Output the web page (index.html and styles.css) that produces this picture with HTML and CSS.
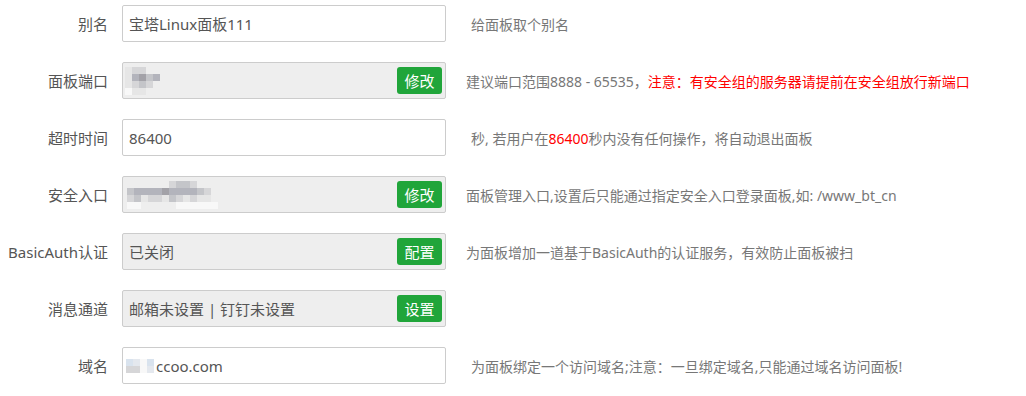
FILE: index.html
```html
<!DOCTYPE html>
<html lang="zh-CN">
<head>
  <meta charset="UTF-8">
  <title>面板设置</title>
  <link rel="stylesheet" href="styles.css">
</head>
<body>
  <div class="setting-list">

    <div class="line">
      <span class="tname">别名</span>
      <input class="field" type="text" value="宝塔Linux面板111">
      <span class="tips tips-sp">给面板取个别名</span>
    </div>

    <div class="line">
      <span class="tname">面板端口</span>
      <div class="field disabled">
        <!-- 端口号已打码 -->
        <span class="mosaic port">
          <i class="m1"></i><i class="m2"></i><i class="m2"></i><i></i><i></i><i></i>
          <i class="m1"></i><i class="m4"></i><i class="m5"></i><i class="m3"></i><i class="m4"></i><i></i>
          <i class="m1"></i><i class="m2"></i><i class="m3"></i><i class="m2"></i><i></i><i></i>
          <i class="m0"></i><i class="m1"></i><i class="m1"></i><i></i><i></i><i></i>
        </span>
        <button class="btn">修改</button>
      </div>
      <span class="tips">建议端口范围8888 - 65535，<span class="red">注意：有安全组的服务器请提前在安全组放行新端口</span></span>
    </div>

    <div class="line">
      <span class="tname">超时时间</span>
      <input class="field" type="text" value="86400">
      <span class="tips tips-sp">秒, 若用户在<span class="red">86400</span>秒内没有任何操作，将自动退出面板</span>
    </div>

    <div class="line">
      <span class="tname">安全入口</span>
      <div class="field disabled">
        <span class="mosaic entry">
          <i></i><i></i><i></i><i></i><i></i><i></i><i class="m2"></i><i class="m3"></i><i class="m3"></i><i class="m2"></i><i></i><i></i><i></i>
          <i class="m3"></i><i class="m4"></i><i class="m4"></i><i class="m4"></i><i class="m4"></i><i class="m5"></i><i class="m4"></i><i class="m4"></i><i class="m4"></i><i class="m4"></i><i class="m3"></i><i class="m2"></i><i></i>
          <i class="m2"></i><i class="m3"></i><i class="m1"></i><i class="m2"></i><i class="m2"></i><i class="m1"></i><i class="m3"></i><i class="m2"></i><i class="m1"></i><i class="m2"></i><i class="m1"></i><i class="m1"></i><i></i>
          <i class="m0"></i><i class="m0"></i><i></i><i></i><i></i><i></i><i></i><i class="m0"></i><i class="m0"></i><i class="m0"></i><i class="m0"></i><i class="m0"></i><i class="m0"></i>
        </span>
        <button class="btn">修改</button>
      </div>
      <span class="tips">面板管理入口,设置后只能通过指定安全入口登录面板,如: /www_bt_cn</span>
    </div>

    <div class="line">
      <span class="tname">BasicAuth认证</span>
      <div class="field disabled">
        <span class="val">已关闭</span>
        <button class="btn">配置</button>
      </div>
      <span class="tips">为面板增加一道基于BasicAuth的认证服务，有效防止面板被扫</span>
    </div>

    <div class="line">
      <span class="tname">消息通道</span>
      <div class="field disabled">
        <span class="val">邮箱未设置 | 钉钉未设置</span>
        <button class="btn">设置</button>
      </div>
    </div>

    <div class="line">
      <span class="tname">域名</span>
      <div class="field">
        <span class="mosaic domain">
          <i class="b1"></i><i class="b2"></i><i class="m0"></i><i class="b1"></i>
          <i class="m2"></i><i class="m2"></i><i class="m0"></i><i class="b2"></i>
        </span>
        <span class="val">ccoo.com</span>
      </div>
      <span class="tips tips-sp">为面板绑定一个访问域名;注意：一旦绑定域名,只能通过域名访问面板!</span>
    </div>

  </div>
</body>
</html>
```

FILE: styles.css
```css
body {
  margin: 0;
  background: #fff;
  font-family: "Noto Sans", "Noto Sans CJK SC", sans-serif;
  color: #555;
}

.setting-list { display: flex; flex-direction: column; gap: 20px; padding-top: 5px; }
.line { display: flex; align-items: center; height: 37px; }

.tname { width: 108px; margin-right: 14px; text-align: right; font-size: 15px; color: #555; white-space: nowrap; }

.field {
  box-sizing: border-box;
  width: 324px;
  height: 37px;
  border: 1px solid #ccc;
  border-radius: 2px;
  padding: 0 3px 0 6px;
  font-family: inherit;
  font-size: 15px;
  color: #555;
  background: #fff;
  display: flex;
  align-items: center;
  outline: none;
}
.disabled { background: #eee; }
.val { white-space: nowrap; }

.btn {
  margin-left: auto;
  height: 27px;
  width: 45px;
  padding: 0;
  border: none;
  border-radius: 3px;
  background: #20a53a;
  color: #fff;
  font-family: inherit;
  font-size: 15px;
  cursor: pointer;
}

.tips { margin-left: 20px; font-size: 14px; color: #777; white-space: nowrap; }
.tips-sp { margin-left: 25px; }
.red { color: #f00; }

/* mosaic blocks for hidden values */
.mosaic { display: inline-grid; grid-auto-rows: 7px; }
.mosaic i { display: block; }
.port { grid-template-columns: repeat(6, 7px); margin-left: -4px; }
.entry { grid-template-columns: repeat(13, 7px); margin-left: -2px; }
.domain { grid-template-columns: repeat(4, 7px); margin-left: -3px; margin-right: 2px; }
.m0 { background: #f8f8f8; }
.m1 { background: #e6e6e6; }
.m2 { background: #d6d6d8; }
.m3 { background: #c4c5c9; }
.m4 { background: #b3b4bc; }
.m5 { background: #a3a2a8; }
.b1 { background: #d9e3ee; }
.b2 { background: #e4e8ee; }
```
